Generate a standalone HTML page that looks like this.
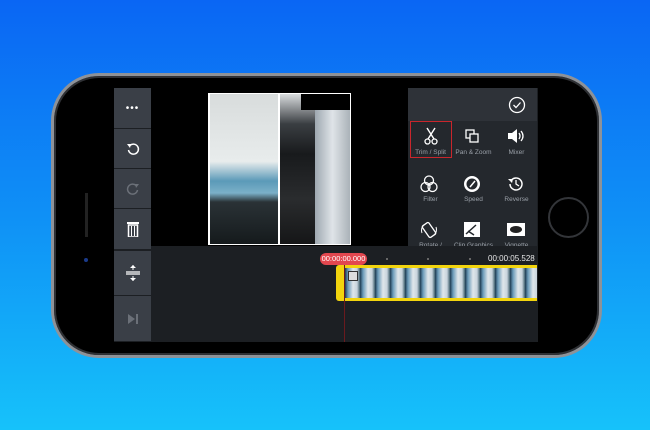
<!DOCTYPE html><html><head><meta charset="utf-8"><style>
*{margin:0;padding:0;box-sizing:border-box}
body{width:650px;height:430px;overflow:hidden;background:linear-gradient(180deg,#0a66f4 0%,#0f90f6 50%,#16c2fa 100%);font-family:"Liberation Sans",sans-serif;position:relative}
.a{position:absolute}
.phone{left:51px;top:73px;width:551px;height:285px;border-radius:48px;background:#000;border:3px solid #8e9298;box-shadow:inset 0 0 0 2px #2e3034}
.btn{left:114px;width:37px;background:#3a3f47;display:flex;align-items:center;justify-content:center;color:#fff}
.lbl{font-size:6.5px;color:#9aa0a8;position:absolute;width:43px;text-align:center}
</style></head><body>
<div class="a phone"></div>
<div class="a" style="left:548px;top:197px;width:41px;height:41px;border-radius:50%;border:2px solid #333539"></div>
<div class="a" style="left:84px;top:258px;width:4px;height:4px;border-radius:50%;background:#1a3a8a"></div>
<div class="a" style="left:85px;top:193px;width:3px;height:44px;background:#222"></div>
<div class="a" style="left:114px;top:88px;width:424px;height:254px;background:#1c1f23"></div>
<div class="a" style="left:151px;top:88px;width:257px;height:158px;background:#000"></div>
<div class="a btn" style="top:88px;height:40px;font-size:10px;letter-spacing:1px">•••</div>
<div class="a btn" style="top:129px;height:39px"><svg width="16" height="16" viewBox="0 0 16 16"><path d="M5 4.5A5 5 0 1 1 3.5 9" fill="none" stroke="#fff" stroke-width="1.5"/><path d="M2 3l4 0-1 4z" fill="#fff"/></svg></div>
<div class="a btn" style="top:169px;height:39px"><svg width="16" height="16" viewBox="0 0 16 16"><path d="M11 4.5A5 5 0 1 0 12.5 9" fill="none" stroke="#6b7078" stroke-width="1.5"/><path d="M14 3l-4 0 1 4z" fill="#6b7078"/></svg></div>
<div class="a btn" style="top:209px;height:40px"><svg width="12" height="16" viewBox="0 0 12 16"><rect x="0" y="1" width="12" height="2" fill="#fff"/><rect x="1.5" y="4" width="9" height="12" fill="none" stroke="#fff" stroke-width="1.5"/><path d="M4.5 5v10M7.5 5v10" stroke="#fff"/></svg></div>
<div class="a btn" style="top:251px;height:44px"><svg width="14" height="18" viewBox="0 0 14 18"><path d="M0 8h14M0 10h14" stroke="#fff" stroke-width="1.3"/><path d="M7 1v5M7 12v5" stroke="#fff"/><path d="M4 4l3-3 3 3zM4 14l3 3 3-3z" fill="#fff"/></svg></div>
<div class="a btn" style="top:296px;height:45px"><svg width="12" height="12" viewBox="0 0 12 12"><path d="M1 1l7 5-7 5z" fill="#6b7078"/><rect x="9" y="1" width="2" height="10" fill="#6b7078"/></svg></div>
<div class="a" style="left:208px;top:93px;width:143px;height:152px;background:#fff"></div>
<div class="a" style="left:210px;top:94px;width:68px;height:150px;background:linear-gradient(180deg,#d8dcdc 0%,#e8ecec 45%,#5b9ab8 58%,#7bb0c8 66%,#2a3236 72%,#151a1c 100%)"></div>
<div class="a" style="left:280px;top:94px;width:70px;height:150px;background:linear-gradient(180deg,#d9dcde 0%,#3a3e42 20%,#181a1c 40%,#2a2c2e 70%,#151617 100%)"></div>
<div class="a" style="left:315px;top:110px;width:35px;height:134px;background:linear-gradient(90deg,#9ea8b0,#dfe4e8 50%,#aab2b8)"></div>
<div class="a" style="left:301px;top:94px;width:49px;height:16px;background:#000"></div>
<div class="a" style="left:408px;top:88px;width:129px;height:158px;background:#24282d"></div>
<div class="a" style="left:408px;top:88px;width:129px;height:33px;background:#2e3238"></div>
<svg class="a" style="left:508px;top:96px" width="18" height="18" viewBox="0 0 18 18"><circle cx="9" cy="9" r="7.5" fill="none" stroke="#fff" stroke-width="1.3"/><path d="M5.5 9l2.5 2.5 4.5-5" fill="none" stroke="#fff" stroke-width="1.3"/></svg>
<div class="a" style="left:410px;top:121px;width:42px;height:37px;border:1.5px solid #c9262c"></div>
<svg class="a" style="left:424px;top:127px" width="14" height="18" viewBox="0 0 14 18"><path d="M3 1l7 11M11 1L4 12" stroke="#fff" stroke-width="1.4"/><circle cx="3.5" cy="14.5" r="2.5" fill="none" stroke="#fff" stroke-width="1.3"/><circle cx="10.5" cy="14.5" r="2.5" fill="none" stroke="#fff" stroke-width="1.3"/></svg>
<div class="lbl" style="left:409px;top:149px">Trim / Split</div>
<svg class="a" style="left:465px;top:129px" width="15" height="15" viewBox="0 0 15 15"><rect x="1" y="1" width="8" height="8" fill="none" stroke="#fff" stroke-width="1.3"/><rect x="5" y="5" width="8" height="8" fill="#24282d" stroke="#fff" stroke-width="1.3"/></svg>
<div class="lbl" style="left:452px;top:149px">Pan &amp; Zoom</div>
<svg class="a" style="left:507px;top:129px" width="18" height="14" viewBox="0 0 18 14"><path d="M1 4h4l5-4v14l-5-4H1z" fill="#fff"/><path d="M12 4q2 3 0 6M14 2q4 5 0 10" fill="none" stroke="#fff" stroke-width="1.3"/></svg>
<div class="lbl" style="left:495px;top:149px">Mixer</div>
<svg class="a" style="left:420px;top:175px" width="18" height="18" viewBox="0 0 18 18"><g fill="none" stroke="#fff" stroke-width="1.3"><circle cx="9" cy="5.5" r="4.5"/><circle cx="5.5" cy="12" r="4.5"/><circle cx="12.5" cy="12" r="4.5"/></g></svg>
<div class="lbl" style="left:409px;top:196px">Filter</div>
<svg class="a" style="left:463px;top:175px" width="18" height="18" viewBox="0 0 18 18"><circle cx="9" cy="9" r="8" fill="#fff"/><circle cx="9" cy="9" r="5.5" fill="#24282d"/><path d="M7 12l5-6" stroke="#fff" stroke-width="1.5"/></svg>
<div class="lbl" style="left:452px;top:196px">Speed</div>
<svg class="a" style="left:507px;top:175px" width="18" height="18" viewBox="0 0 18 18"><path d="M3 9a6 6 0 1 0 2-4.5" fill="none" stroke="#fff" stroke-width="1.5"/><path d="M1 4l5 0-1 4z" fill="#fff"/><path d="M9 5v4l3 2" fill="none" stroke="#fff" stroke-width="1.3"/></svg>
<div class="lbl" style="left:495px;top:196px">Reverse</div>
<svg class="a" style="left:420px;top:221px" width="18" height="18" viewBox="0 0 18 18"><rect x="5" y="2" width="8" height="14" rx="1.5" transform="rotate(-35 9 9)" fill="none" stroke="#fff" stroke-width="1.3"/><path d="M2 12a7 7 0 0 1 2-8M16 6a7 7 0 0 1-2 8" fill="none" stroke="#fff"/></svg>
<div class="lbl" style="left:409px;top:242px;height:4px;overflow:hidden">Rotate /</div>
<svg class="a" style="left:464px;top:222px" width="16" height="15" viewBox="0 0 16 15"><rect x="0" y="0" width="16" height="15" fill="#fff"/><path d="M2 12l10-9M4 9l6 4" stroke="#24282d" stroke-width="1.5"/></svg>
<div class="lbl" style="left:452px;top:242px;height:4px;overflow:hidden">Clip Graphics</div>
<div class="a" style="left:507px;top:223px;width:18px;height:13px;background:#fff"><div style="margin:3px 3px;width:12px;height:7px;border-radius:50%;background:#222"></div></div>
<div class="lbl" style="left:495px;top:242px;height:4px;overflow:hidden">Vignette</div>
<div class="a" style="left:320px;top:253px;width:47px;height:12px;border-radius:6px;background:#e2474f;color:#fff;font-size:7.5px;text-align:center;line-height:12px">00:00:00.000</div>
<div class="a" style="left:386px;top:258px;width:2px;height:2px;background:#666"></div>
<div class="a" style="left:427px;top:258px;width:2px;height:2px;background:#666"></div>
<div class="a" style="left:469px;top:258px;width:2px;height:2px;background:#666"></div>
<div class="a" style="left:488px;top:254px;color:#e8e8e8;font-size:8px">00:00:05.528</div>
<div class="a" style="left:336px;top:265px;width:201px;height:36px;background:#f2d40e;border-radius:3px 0 0 3px"></div>
<div class="a" style="left:345px;top:268px;width:192px;height:30px;background:repeating-linear-gradient(90deg,#1e3a50 0,#6a9ab8 3px,#dfe6ea 8px,#c8d4dc 12px,#40606e 15px)"></div>
<div class="a" style="left:348px;top:271px;width:10px;height:10px;background:#ddd;border:1px solid #333"></div>
<div class="a" style="left:344px;top:265px;width:1px;height:77px;background:#6a1a1e"></div>
</body></html>
